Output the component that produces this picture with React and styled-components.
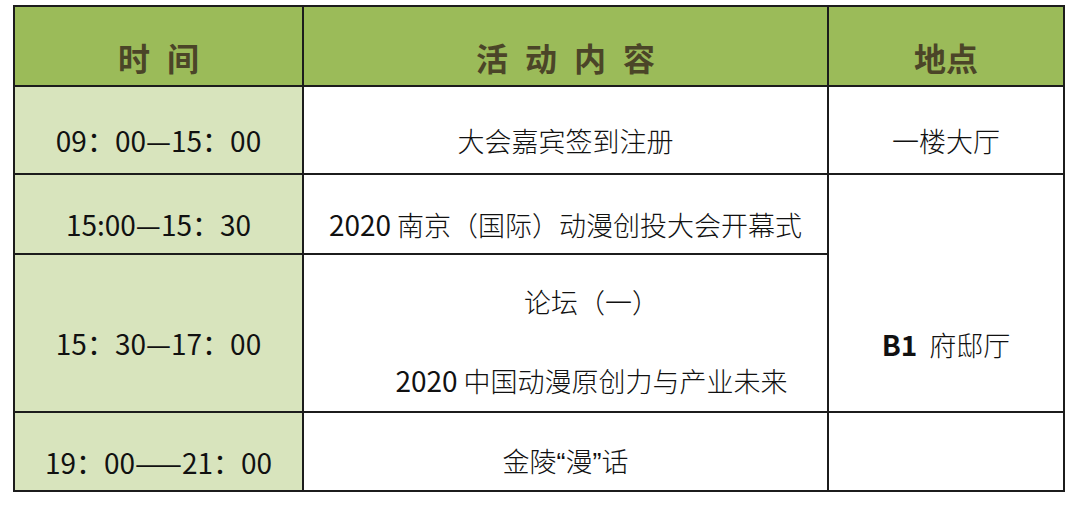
import React from 'react'
import styled, { createGlobalStyle } from 'styled-components'

const GlobalStyle = createGlobalStyle`
  html, body {
    margin: 0;
    padding: 0;
    background: #ffffff;
  }
  body {
    font-family: "Noto Sans CJK SC", "Noto Sans", sans-serif;
  }
`

const Page = styled.div`
  padding: 5px 0 0 13px;
`

const Table = styled.table`
  width: 1050px;
  border-collapse: collapse;
  table-layout: fixed;
  border: 2px solid #1c1c1c;
`

const HeadRow = styled.tr`
  height: 80px;
`

const HeadCell = styled.th`
  background: #9bbb59;
  border: 2px solid #1c1c1c;
  color: #4b4528;
  font-size: 32px;
  font-weight: 700;
  letter-spacing: ${p => p.$spread ? '17px' : '0'};
  text-indent: ${p => p.$spread ? '17px' : '0'};
  padding: 22px 0 0;
  line-height: 1.2;
  text-align: center;
  vertical-align: middle;
`

const Row = styled.tr`
  height: ${p => p.$h}px;
`

const Cell = styled.td`
  border: 2px solid #1c1c1c;
  background: ${p => p.$time ? '#d8e4bd' : '#ffffff'};
  color: #111111;
  font-size: ${p => p.$time ? 28 : 27}px;
  font-weight: ${p => p.$time ? 400 : 300};
  text-align: center;
  vertical-align: middle;
  padding: ${p => p.$pad || '22px 0 0'};
  line-height: 1.2;
  white-space: nowrap;
`

const Num = styled.span`
  font-size: 28px;
  font-weight: 400;
`

const Bold = styled.span`
  font-weight: 700;
  font-size: 28px;
  margin-right: 6px;
`

const Quote = styled.span`
  font-family: "Liberation Sans", sans-serif;
  font-weight: 400;
`

const Stack = styled.div`
  display: flex;
  flex-direction: column;
  align-items: center;
  gap: 46px;
  padding-left: ${p => p.$shift || 0}px;
`

const App = () => (
  <Page>
    <GlobalStyle />
    <Table>
      <colgroup>
        <col style={{ width: 289 }} />
        <col style={{ width: 525 }} />
        <col style={{ width: 236 }} />
      </colgroup>
      <thead>
        <HeadRow>
          <HeadCell $spread>时间</HeadCell>
          <HeadCell $spread>活动内容</HeadCell>
          <HeadCell>地点</HeadCell>
        </HeadRow>
      </thead>
      <tbody>
        <Row $h={88}>
          <Cell $time>09：00—15：00</Cell>
          <Cell>大会嘉宾签到注册</Cell>
          <Cell>一楼大厅</Cell>
        </Row>
        <Row $h={80}>
          <Cell $time>15:00—15：30</Cell>
          <Cell><Num>2020</Num> 南京（国际）动漫创投大会开幕式</Cell>
          <Cell rowSpan={2} $pad="104px 0 0">
            <Bold>B1</Bold> 府邸厅
          </Cell>
        </Row>
        <Row $h={158}>
          <Cell $time>15：30—17：00</Cell>
          <Cell $pad="18px 0 0">
            <Stack $shift={52}>
              <span>论坛（一）</span>
              <span><Num>2020</Num> 中国动漫原创力与产业未来</span>
            </Stack>
          </Cell>
        </Row>
        <Row $h={79}>
          <Cell $time>19：00——21：00</Cell>
          <Cell>金陵<Quote>“</Quote>漫<Quote>”</Quote>话</Cell>
          <Cell />
        </Row>
      </tbody>
    </Table>
  </Page>
)

export default App
